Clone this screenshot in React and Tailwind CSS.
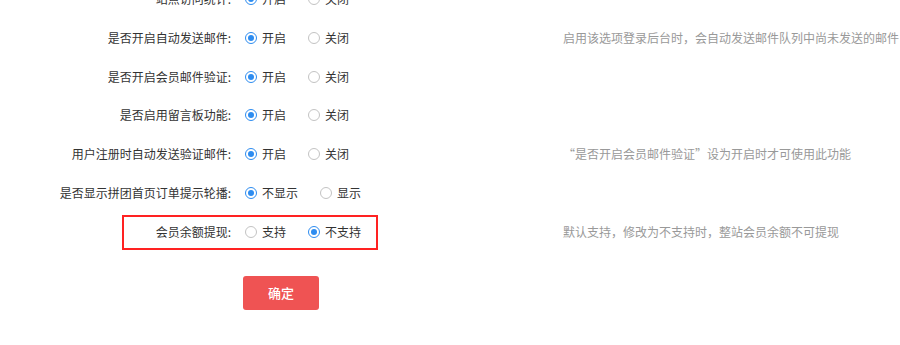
import React, { useState } from "react";

const rows = [
  { key: "stats", label: "站点访问统计:", options: ["开启", "关闭"], value: 0, tip: "" },
  { key: "mailAuto", label: "是否开启自动发送邮件:", options: ["开启", "关闭"], value: 0, tip: "启用该选项登录后台时，会自动发送邮件队列中尚未发送的邮件" },
  { key: "mailVerify", label: "是否开启会员邮件验证:", options: ["开启", "关闭"], value: 0, tip: "" },
  { key: "board", label: "是否启用留言板功能:", options: ["开启", "关闭"], value: 0, tip: "" },
  { key: "regMail", label: "用户注册时自动发送验证邮件:", options: ["开启", "关闭"], value: 0, tip: "“是否开启会员邮件验证”设为开启时才可使用此功能" },
  { key: "groupTip", label: "是否显示拼团首页订单提示轮播:", options: ["不显示", "显示"], value: 0, tip: "" },
  { key: "withdraw", label: "会员余额提现:", options: ["支持", "不支持"], value: 1, tip: "默认支持，修改为不支持时，整站会员余额不可提现", marked: true },
];

const Radio = ({ checked, label, onClick }) => (
  <label className="flex items-center gap-[5px] cursor-pointer" onClick={onClick}>
    <span
      className={`flex items-center justify-center w-[12px] h-[12px] rounded-full border bg-white ${
        checked ? "border-[#2d8cf0]" : "border-[#c3c3c3]"
      }`}
    >
      {checked && <span className="w-[6px] h-[6px] rounded-full bg-[#2d8cf0]" />}
    </span>
    <span className="text-[#333]">{label}</span>
  </label>
);

export default function App() {
  const [values, setValues] = useState(
    Object.fromEntries(rows.map((r) => [r.key, r.value]))
  );

  return (
    <div
      className="w-[900px] h-[345px] overflow-hidden bg-white text-[12px]"
      style={{ fontFamily: '"Noto Sans CJK SC", "Microsoft YaHei", sans-serif' }}
    >
      <div className="-mt-[20.4px]">
        {rows.map((row) => (
          <div key={row.key} className="relative flex items-center h-[38.8px]">
            {/* label */}
            <div className="w-[231px] shrink-0 text-right text-[#333] tracking-[0px]">{row.label}</div>
            {/* options */}
            <div className="ml-[14px] w-[318px] shrink-0 flex items-center gap-[22px]">
              {row.options.map((opt, i) => (
                <Radio
                  key={opt}
                  label={opt}
                  checked={values[row.key] === i}
                  onClick={() => setValues({ ...values, [row.key]: i })}
                />
              ))}
            </div>
            {/* tip */}
            <div className="text-[#999] whitespace-nowrap">{row.tip}</div>

            {/* red annotation box */}
            {row.marked && (
              <div className="absolute left-[122px] top-[2.6px] bottom-[1.2px] w-[256px] border-2 border-[#ff2222] pointer-events-none" />
            )}
          </div>
        ))}
      </div>

      <button
        type="button"
        className="ml-[243px] mt-[25px] w-[76px] h-[34px] rounded-[3px] bg-[#ef5353] text-white text-[13px] font-medium hover:bg-[#e94545]"
      >
        确定
      </button>
    </div>
  );
}
